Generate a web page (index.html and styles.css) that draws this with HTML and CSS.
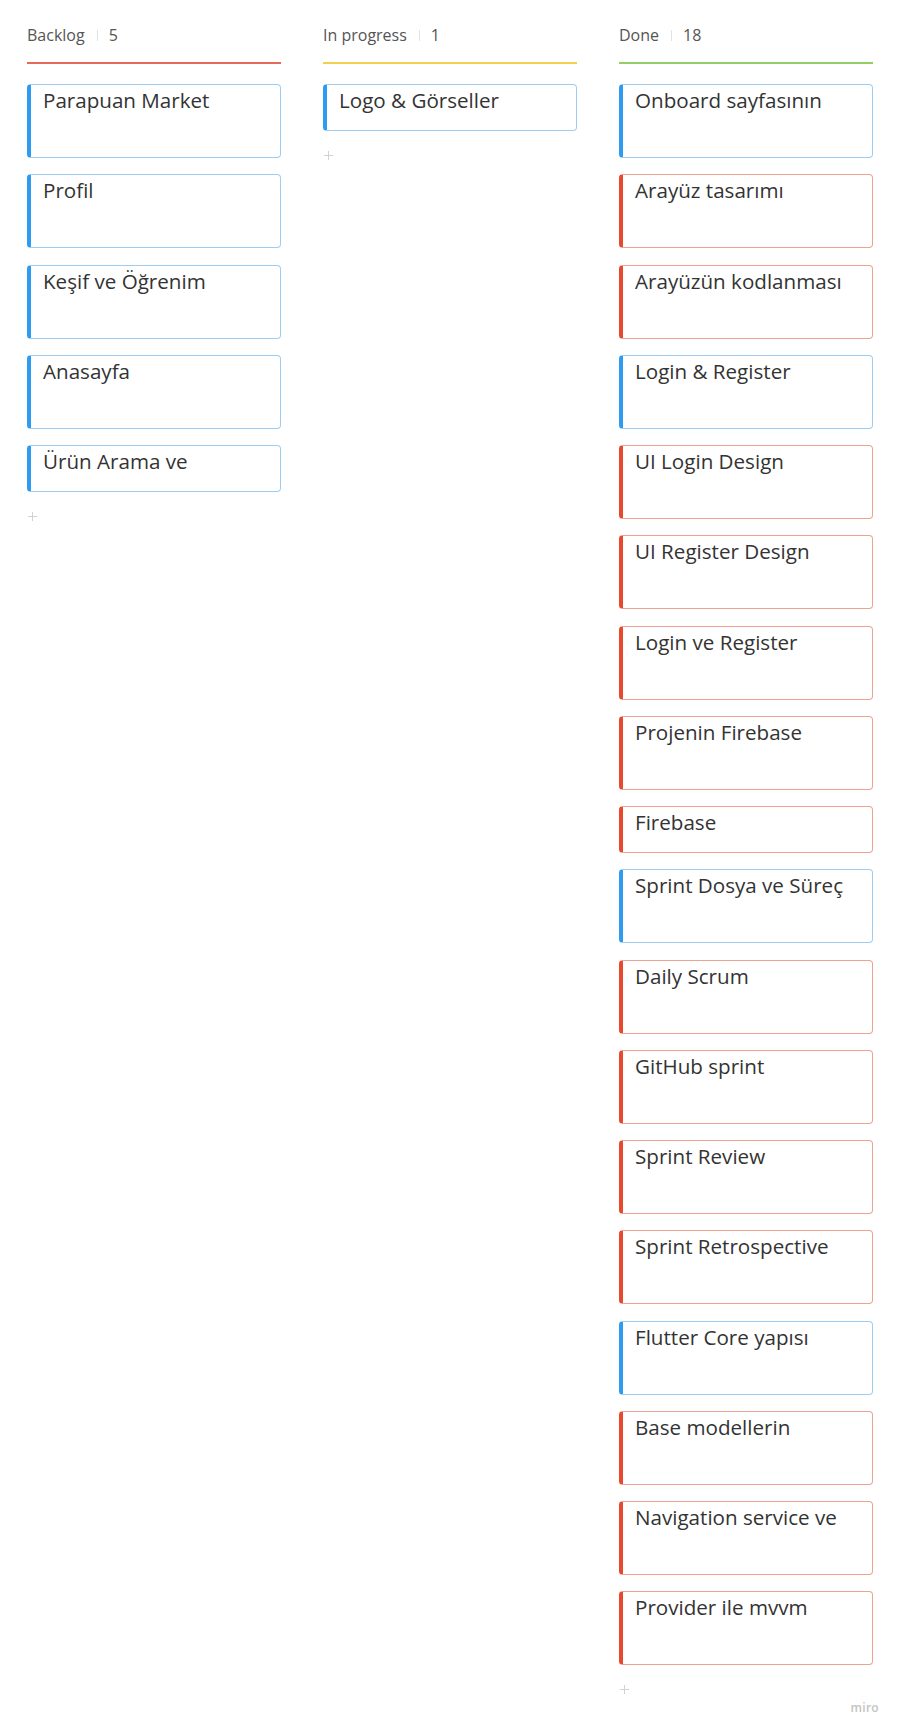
FILE: index.html
```html
<!DOCTYPE html>
<html lang="tr">
<head>
<meta charset="utf-8">
<title>Kanban</title>
<link rel="stylesheet" href="styles.css">
</head>
<body>
<div class="board">
  <section class="col">
    <div class="col-head red-line"><span class="name">Backlog</span><span class="sep"></span><span class="count">5</span></div>
    <div class="cards">
      <div class="card blue">Parapuan Market</div>
      <div class="card blue">Profil</div>
      <div class="card blue">Keşif ve Öğrenim</div>
      <div class="card blue">Anasayfa</div>
      <div class="card blue short">Ürün Arama ve</div>
    </div>
    <div class="add"><svg width="9" height="9" viewBox="0 0 9 9"><path d="M4.5 0v9M0 4.5h9" stroke="#d2d2d2" stroke-width="1"/></svg></div>
  </section>
  <section class="col">
    <div class="col-head yellow-line"><span class="name">In progress</span><span class="sep"></span><span class="count">1</span></div>
    <div class="cards">
      <div class="card blue short">Logo &amp; Görseller</div>
    </div>
    <div class="add"><svg width="9" height="9" viewBox="0 0 9 9"><path d="M4.5 0v9M0 4.5h9" stroke="#d2d2d2" stroke-width="1"/></svg></div>
  </section>
  <section class="col">
    <div class="col-head green-line"><span class="name">Done</span><span class="sep"></span><span class="count">18</span></div>
    <div class="cards">
      <div class="card blue">Onboard sayfasının</div>
      <div class="card red">Arayüz tasarımı</div>
      <div class="card red">Arayüzün kodlanması</div>
      <div class="card blue">Login &amp; Register</div>
      <div class="card red">UI Login Design</div>
      <div class="card red">UI Register Design</div>
      <div class="card red">Login ve Register</div>
      <div class="card red">Projenin Firebase</div>
      <div class="card red short">Firebase</div>
      <div class="card blue">Sprint Dosya ve Süreç</div>
      <div class="card red">Daily Scrum</div>
      <div class="card red">GitHub sprint</div>
      <div class="card red">Sprint Review</div>
      <div class="card red">Sprint Retrospective</div>
      <div class="card blue">Flutter Core yapısı</div>
      <div class="card red">Base modellerin</div>
      <div class="card red">Navigation service ve</div>
      <div class="card red">Provider ile mvvm</div>
    </div>
    <div class="add"><svg width="9" height="9" viewBox="0 0 9 9"><path d="M4.5 0v9M0 4.5h9" stroke="#d2d2d2" stroke-width="1"/></svg></div>
  </section>
</div>
<div class="brand">miro</div>
</body>
</html>
```

FILE: styles.css
```css
html, body {
  margin: 0;
  padding: 0;
  background: #ffffff;
}

body {
  position: relative;
  width: 900px;
  height: 1735px;
  font-family: "Open Sans", "Liberation Sans", sans-serif;
  color: #333333;
}

.board {
  display: flex;
  gap: 42px;
  padding: 24px 0 0 27px;
}

.col {
  width: 254px;
  display: flex;
  flex-direction: column;
}

.col-head {
  display: flex;
  align-items: center;
  font-size: 16px;
  line-height: 22px;
  color: #555555;
  padding-bottom: 16px;
  border-bottom: 2px solid #e8604c;
}

.red-line { border-bottom-color: #e66a57; }
.yellow-line { border-bottom-color: #f3cf4e; }
.green-line { border-bottom-color: #93cf62; }

.sep {
  width: 1px;
  height: 11px;
  background: #e2e2e2;
  margin: 1px 11px 0 12px;
}

.cards {
  display: flex;
  flex-direction: column;
  gap: 16.25px;
  margin-top: 20px;
}

.card {
  box-sizing: border-box;
  height: 74px;
  border: 1px solid #9fcdf1;
  border-left: 4px solid #2d9bf0;
  border-radius: 4px;
  padding: 1px 10px 0 12px;
  font-size: 20.6px;
  line-height: 28px;
  color: #333333;
  white-space: nowrap;
  overflow: hidden;
}

.card.short {
  height: 47px;
}

.card.blue {
  border-color: #9fcdf1;
  border-left-color: #2d9bf0;
}

.card.red {
  border-color: #eea392;
  border-left-color: #e6492d;
}

.add {
  margin: 20px 0 0 1px;
  height: 9px;
  line-height: 0;
}

.brand {
  position: absolute;
  top: 1700px;
  right: 21px;
  font-size: 12px;
  line-height: 16px;
  font-weight: 600;
  letter-spacing: 0.3px;
  color: #c4c4c4;
}
```
